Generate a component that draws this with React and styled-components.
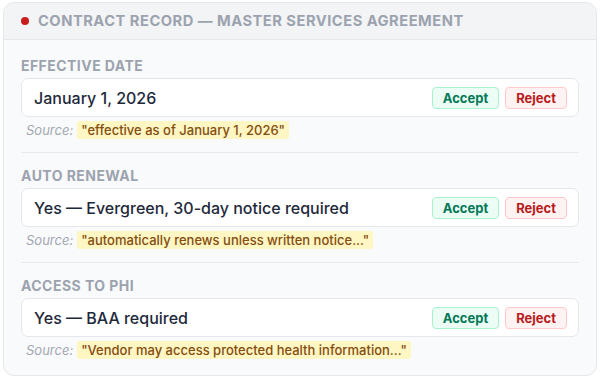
import styled, { createGlobalStyle } from 'styled-components';

const GlobalStyle = createGlobalStyle`
  html, body {
    margin: 0;
    background: #ffffff;
  }
  body {
    padding: 2px 3px;
    font-family: Inter, "Liberation Sans", sans-serif;
  }
`;

const Card = styled.div`
  width: 594px;
  height: 374px;
  box-sizing: border-box;
  border: 1px solid #e5e7eb;
  border-radius: 11px;
  background: #f9fafb;
  overflow: hidden;
  display: flex;
  flex-direction: column;
`;

const Header = styled.div`
  height: 38px;
  display: flex;
  align-items: center;
  gap: 9px;
  padding: 0 17px;
  background: #f3f4f6;
  border-bottom: 1px solid #e5e7eb;
  box-sizing: border-box;
`;

const Dot = styled.span`
  width: 8px;
  height: 8px;
  border-radius: 50%;
  background: #c81e1e;
  flex: none;
`;

const Title = styled.h1`
  margin: 0;
  font-size: 14.7px;
  font-weight: 700;
  letter-spacing: 0.5px;
  text-transform: uppercase;
  color: #9ca3af;
`;

const Body = styled.div`
  padding: 3px 17px 3px 17px;
`;

const Field = styled.section`
  padding: 14px 0 13px;
  border-bottom: 1px solid #e9eaee;

  &:last-child{
    border-bottom: none;
  }
`;

const Label = styled.div`
  font-size: 14px;
  line-height: 17px;
  font-weight: 700;
  letter-spacing: 0.45px;
  text-transform: uppercase;
  color: #9ca3af;
  margin-bottom: 4px;
`;

const ValueBox = styled.div`
  height: 39px;
  box-sizing: border-box;
  display: flex;
  align-items: center;
  padding: 0 11px 0 12px;
  background: #ffffff;
  border: 1px solid #e5e7eb;
  border-radius: 7px;
`;

const Value = styled.span`
  flex: 1;
  font-size: 16px;
  font-weight: 500;
  color: #1e293b;
`;

const Actions = styled.div`
  display: flex;
  gap: 6px;
`;

const ActionButton = styled.button`
  height: 22px;
  box-sizing: border-box;
  padding: 0 10px;
  border-radius: 4px;
  font-family: inherit;
  font-size: 13px;
  font-weight: 700;
  cursor: pointer;
  border: 1px solid ${p => (p.$tone === 'accept' ? '#a7f3d0' : '#fecaca')};
  background: ${p => (p.$tone === 'accept' ? '#ecfdf5' : '#fef2f2')};
  color: ${p => (p.$tone === 'accept' ? '#047857' : '#b91c1c')};
`;

const Source = styled.div`
  margin-top: 4px;
  height: 18px;
  display: flex;
  align-items: center;
  gap: 4px;
  padding-left: 5px;
  font-size: 13px;
`;

const SourceLabel = styled.span`
  font-style: italic;
  color: #a3a8b1;
`;

const Quote = styled.span`
  height: 18px;
  line-height: 18px;
  padding: 0 4px;
  border-radius: 2px;
  background: #fef6c3;
  color: #854d0e;
  font-weight: 500;
`;

const fields = [
  {
    label: 'Effective Date',
    value: 'January 1, 2026',
    quote: '"effective as of January 1, 2026"',
  },
  {
    label: 'Auto Renewal',
    value: 'Yes — Evergreen, 30-day notice required',
    quote: '"automatically renews unless written notice..."',
  },
  {
    label: 'Access to PHI',
    value: 'Yes — BAA required',
    quote: '"Vendor may access protected health information..."',
  },
];

export default function App() {
  return (
    <>
      <GlobalStyle />
      <Card>
        <Header>
          <Dot />
          <Title>Contract Record — Master Services Agreement</Title>
        </Header>
        <Body>
          {fields.map(f => (
            <Field key={f.label}>
              <Label>{f.label}</Label>
              <ValueBox>
                <Value>{f.value}</Value>
                <Actions>
                  <ActionButton $tone="accept">Accept</ActionButton>
                  <ActionButton $tone="reject">Reject</ActionButton>
                </Actions>
              </ValueBox>
              <Source>
                <SourceLabel>Source:</SourceLabel>
                <Quote>{f.quote}</Quote>
              </Source>
            </Field>
          ))}
        </Body>
      </Card>
    </>
  );
}
